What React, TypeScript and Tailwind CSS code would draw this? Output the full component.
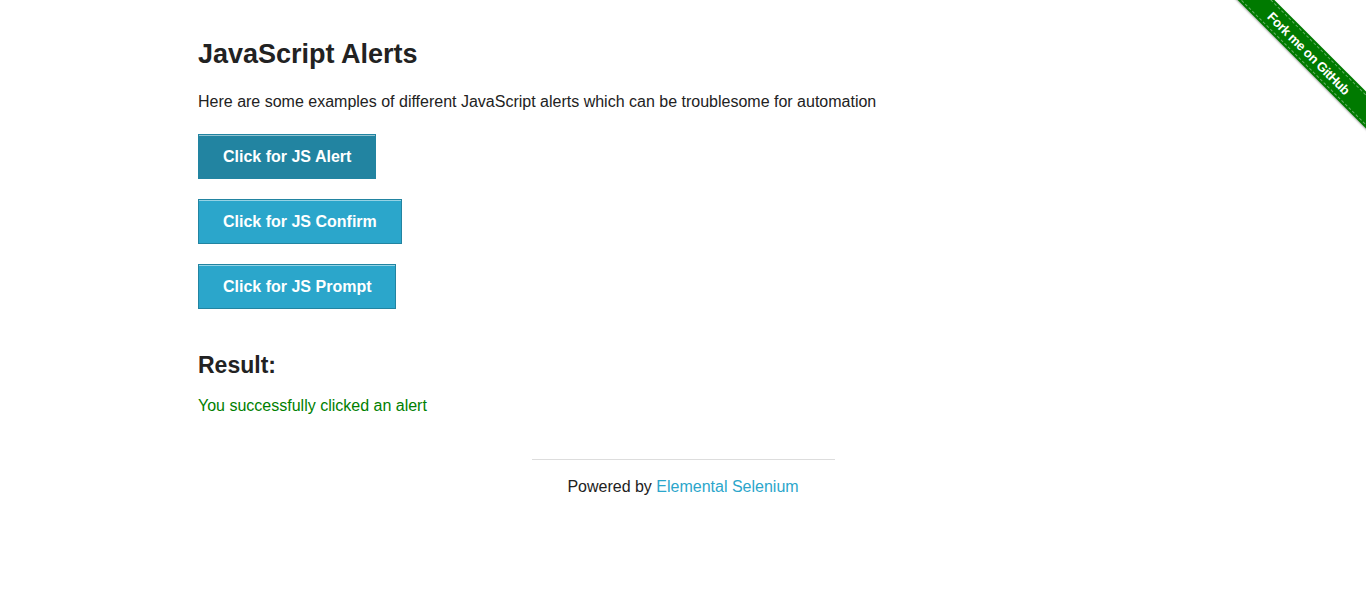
const buttons = [
  { label: "Click for JS Alert", active: true },
  { label: "Click for JS Confirm", active: false },
  { label: "Click for JS Prompt", active: false },
];

function ForkRibbon() {
  return (
    <div className="absolute top-0 right-0 w-[150px] h-[150px] overflow-hidden pointer-events-none">
      <div className="absolute top-[40px] right-[-48px] w-[210px] h-[26px] rotate-45 bg-[#007a00] shadow-[0_1px_2px_rgba(0,0,0,0.35)] flex items-center justify-center">
        <div className="w-full h-[22px] border-y border-dashed border-white/40 flex items-center justify-center">
          <span className="text-white text-[13px] font-bold tracking-[-0.4px] leading-none">
            Fork me on GitHub
          </span>
        </div>
      </div>
    </div>
  );
}

export default function App() {
  return (
    <div className="relative min-h-[589px] bg-white text-[#222] font-['Liberation_Sans',Arial,sans-serif]">
      <ForkRibbon />
      <div className="max-w-[1000px] mx-auto px-[15px] pt-[38px]">
        <h3 className="text-[27px] leading-[32px] font-bold">JavaScript Alerts</h3>
        <p className="mt-[20px] text-[16px] leading-[24px]">
          Here are some examples of different JavaScript alerts which can be troublesome for automation
        </p>
        <ul className="mt-[20px] flex flex-col items-start gap-[20px]">
          {buttons.map((b) => (
            <li key={b.label}>
              <button
                className={
                  b.active
                    ? "h-[45px] px-[24px] border border-[#2284a1] bg-[#2284a1] text-white text-[16px] font-bold shadow-[inset_0_1px_0_rgba(255,255,255,0.5)]"
                    : "h-[45px] px-[24px] border border-[#2284a1] bg-[#2ba6cb] text-white text-[16px] font-bold shadow-[inset_0_1px_0_rgba(255,255,255,0.5)]"
                }
              >
                {b.label}
              </button>
            </li>
          ))}
        </ul>
        <h4 className="mt-[42px] text-[23px] leading-[28px] font-bold">Result:</h4>
        <p className="mt-[15px] text-[16px] leading-[24px] text-[#008000]">You successfully clicked an alert</p>
      </div>
      <div className="max-w-[1000px] mx-auto px-[15px] mt-[41px]">
        <div className="w-[303px] mx-auto">
          <hr className="border-0 border-t border-[#dddddd]" />
          <div className="mt-[15px] text-center text-[16px] leading-[24px]">
            Powered by <span className="text-[#2ba6cb]">Elemental Selenium</span>
          </div>
        </div>
      </div>
    </div>
  );
}
